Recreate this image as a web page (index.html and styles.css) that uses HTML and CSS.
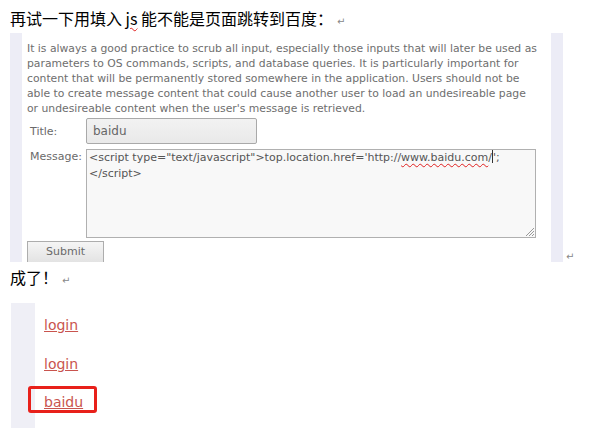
FILE: index.html
```html
<!DOCTYPE html>
<html>
<head>
<meta charset="utf-8">
<link rel="stylesheet" href="styles.css">
</head>
<body>
<p class="line heading">再试一下用填入 <span class="spell">js</span> 能不能是页面跳转到百度：<span class="mark">↵</span></p>
<div class="shot-row">
  <div class="shot">
    <div class="stripe"></div>
    <div class="shot-body">
      <p class="intro">It is always a good practice to scrub all input, especially those inputs that will later be used as<br>parameters to OS commands, scripts, and database queries. It is particularly important for<br>content that will be permanently stored somewhere in the application. Users should not be<br>able to create message content that could cause another user to load an undesireable page<br>or undesireable content when the user's message is retrieved.</p>
      <div class="form">
        <div class="row row-title">
          <span class="label">Title:</span>
          <div class="input">baidu</div>
        </div>
        <div class="row row-msg">
          <span class="label">Message:</span>
          <div class="textarea">&lt;script type="text/javascript"&gt;top.location.href='http://<span class="spell">www.baidu.com</span>/<span class="caret"></span>';<br>&lt;/script&gt;
            <svg class="grip" width="10" height="10" viewBox="0 0 10 10"><path d="M9 1L1 9M9 4L4 9M9 7L7 9" stroke="#999" stroke-width="1" fill="none"/></svg>
          </div>
        </div>
        <div class="button">Submit</div>
      </div>
    </div>
    <div class="stripe stripe-right"></div>
  </div>
  <span class="mark mark-end">↵</span>
</div>
<p class="line done">成了！<span class="mark">↵</span></p>
<div class="links">
  <div class="stripe stripe-wide"></div>
  <div class="link-list">
    <div class="link-item"><a href="#">login</a></div>
    <div class="link-item"><a href="#">login</a></div>
    <div class="link-item highlight"><a href="#">baidu</a></div>
  </div>
</div>
</body>
</html>
```
FILE: styles.css
```css
html, body {
  margin: 0;
  padding: 0;
  background: #ffffff;
}
body {
  font-family: "DejaVu Sans", sans-serif;
  width: 590px;
  height: 431px;
  overflow: hidden;
}
.line {
  margin: 0;
  padding-left: 10px;
  height: 20px;
  font-family: "Noto Sans CJK SC", sans-serif;
  font-size: 16px;
  line-height: 20px;
  color: #000;
}
.heading {
  margin-top: 8px;
}
.spell {
  text-decoration: underline wavy #e02020;
  text-decoration-thickness: 1px;
  text-underline-offset: 2px;
}
.mark {
  font-family: "DejaVu Sans", sans-serif;
  font-size: 10px;
  line-height: 10px;
  color: #888;
  margin-left: 4px;
}
.shot-row {
  display: flex;
  align-items: flex-end;
  margin-top: 5px;
}
.shot {
  display: flex;
  margin-left: 10px;
  width: 553px;
  height: 229px;
  overflow: hidden;
  background: #fff;
}
.stripe {
  width: 12px;
  background: #ededf6;
  flex: none;
}
.stripe-right {
  background: #ececf6;
}
.mark-end {
  margin-left: 3px;
  line-height: 12px;
  margin-bottom: -1px;
}
.shot-body {
  flex: 1;
  padding: 8px 0 0 5px;
}
.intro {
  margin: 0;
  font-size: 10.8px;
  line-height: 15px;
  color: #6e6e6e;
  white-space: nowrap;
}
.form {
  margin-top: 2px;
  display: flex;
  flex-direction: column;
}
.row {
  display: flex;
}
.row-title {
  align-items: center;
}
.row-msg {
  margin-top: 5px;
  align-items: flex-start;
}
.label {
  width: 56px;
  padding-left: 3px;
  font-size: 11px;
  line-height: 15px;
  color: #6a6a6a;
}
.row-msg .label {
  padding-top: 0;
}
.input {
  height: 24px;
  border: 1px solid #a9a9a9;
  border-radius: 2px;
  background: linear-gradient(#f2f2f2, #e9e9e9);
  font-size: 12px;
  line-height: 24px;
  padding-left: 6px;
  color: #666;
  width: 163px;
}
.textarea {
  position: relative;
  width: 444px;
  height: 87px;
  border: 1px solid #b0b0b0;
  background: #f8f8f8;
  padding: 0 2px;
  font-family: "DejaVu Sans", sans-serif;
  font-size: 11px;
  line-height: 16px;
  color: #555;
}
.caret {
  display: inline-block;
  width: 1px;
  height: 13px;
  background: #333;
  vertical-align: -2px;
}
.grip {
  position: absolute;
  right: 0;
  bottom: 0;
}
.button {
  margin-top: 3px;
  width: 75px;
  height: 20px;
  border: 1px solid #adadad;
  background: linear-gradient(#f5f5f5, #e3e3e3);
  font-size: 11px;
  line-height: 20px;
  text-align: center;
  color: #6a6a6a;
}
.done {
  margin-top: 5px;
}
.links {
  display: flex;
  margin-top: 16px;
  margin-left: 11px;
  height: 125px;
}
.stripe-wide {
  width: 24px;
  background: #efeff6;
}
.link-list {
  display: flex;
  flex-direction: column;
  gap: 20.5px;
  padding: 13px 0 0 9px;
}
.link-item {
  position: relative;
  font-size: 14px;
  line-height: 18px;
}
.link-item a {
  color: #c9544e;
  text-decoration: underline;
}
.highlight::before {
  content: "";
  position: absolute;
  left: -16px;
  top: -7px;
  width: 69px;
  height: 27px;
  box-sizing: border-box;
  border: 3px solid #e8201a;
  border-radius: 3px;
}
```
